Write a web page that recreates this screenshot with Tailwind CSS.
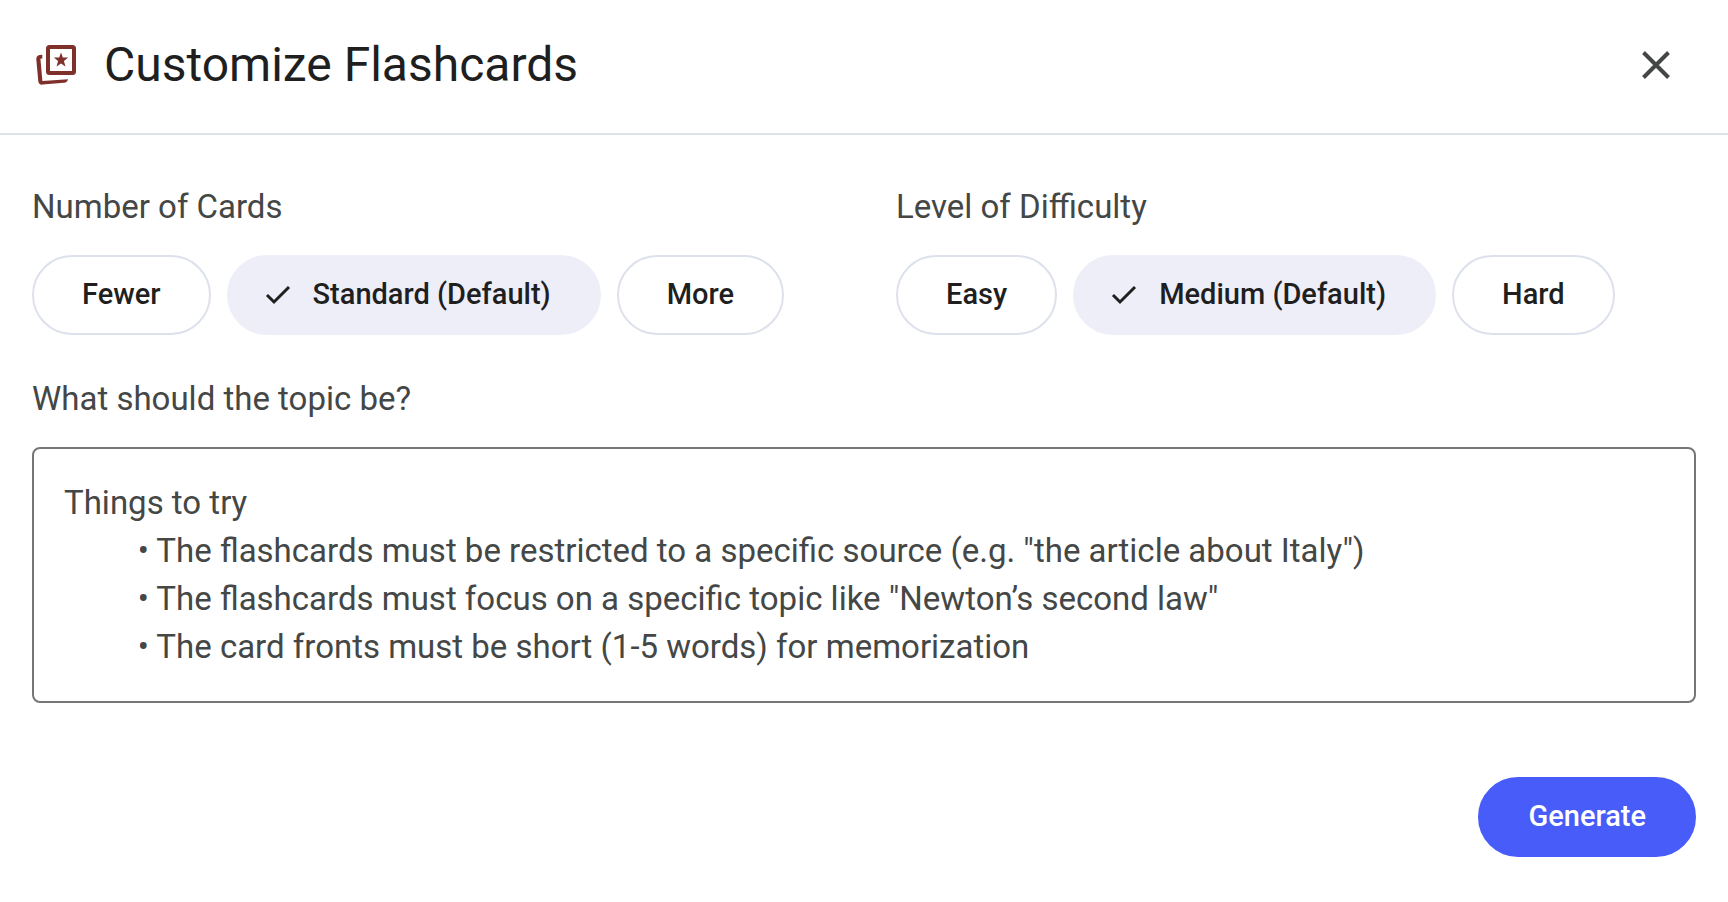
<!DOCTYPE html>
<html lang="en">
  <head>
    <meta charset="UTF-8" />
    <meta name="viewport" content="width=device-width, initial-scale=1.0" />
    <title>Customize Flashcards</title>
    <script src="https://cdn.jsdelivr.net/npm/@tailwindcss/browser@4"></script>
  </head>
  <body class="bg-white font-[Roboto,sans-serif] text-[#444746]">
    <header
      class="flex items-center justify-between border-b-2 border-[#dde1e8] pt-[33px] pb-9 pl-8 pr-10"
    >
      <div class="flex items-center gap-6">
        <svg class="size-12" viewBox="0 0 48 48" fill="none" aria-hidden="true">
          <rect x="16" y="6" width="26" height="26" rx="1.5" stroke="#80302a" stroke-width="4" stroke-linejoin="round" />
          <path
            d="M29 11.500L30.800 16.500H36.200L31.900 19.900L33.500 25.500L29 22.400L24.500 25.500L26.100 19.900L21.800 16.500H27.200Z"
            fill="#80302a"
          />
          <path
            d="M10.300 13.800L7.700 14Q4 14.600 4.300 18.500L6.300 40.500Q6.800 44 10.500 43.600L32 41.800Q35.300 41.400 36 38.200L10.400 40L8.400 17.700L10.300 17.500Z"
            fill="#80302a"
          />
        </svg>
        <h1 class="text-5xl leading-16 text-[#1f1f1f]">
          Customize Flashcards
        </h1>
      </div>
      <button type="button" aria-label="Close" class="p-2">
        <svg class="size-12" viewBox="0 0 48 48" fill="none" aria-hidden="true">
          <path d="M11.500 11.500l25 25M36.500 11.500l-25 25" stroke="#444746" stroke-width="4" />
        </svg>
      </button>
    </header>

    <form class="px-8 pt-12" onsubmit="return false">
      <div class="grid grid-cols-2 gap-16">
        <fieldset>
          <legend class="text-[33px] leading-12">Number of Cards</legend>
          <div class="mt-6 flex gap-4 text-[29px] font-medium text-[#1f1f1f]">
            <label class="flex h-20 items-center rounded-full border-2 border-[#dde1eb] px-12">
              <input class="sr-only" type="radio" name="count" value="fewer" />
              Fewer
            </label>
            <label class="flex h-20 items-center gap-4 rounded-full border-2 border-[#eeeef9] bg-[#eeeef9] pl-8 pr-12">
              <input class="sr-only" type="radio" name="count" value="standard" checked />
              <svg class="size-9" viewBox="0 0 36 36" fill="none" aria-hidden="true">
                <path d="M6 18l7 7L28 10" stroke="#1f1f1f" stroke-width="3" />
              </svg>
              Standard (Default)
            </label>
            <label class="flex h-20 items-center rounded-full border-2 border-[#dde1eb] px-12">
              <input class="sr-only" type="radio" name="count" value="more" />
              More
            </label>
          </div>
        </fieldset>

        <fieldset>
          <legend class="text-[33px] leading-12">Level of Difficulty</legend>
          <div class="mt-6 flex gap-4 text-[29px] font-medium text-[#1f1f1f]">
            <label class="flex h-20 items-center rounded-full border-2 border-[#dde1eb] px-12">
              <input class="sr-only" type="radio" name="level" value="easy" />
              Easy
            </label>
            <label class="flex h-20 items-center gap-4 rounded-full border-2 border-[#eeeef9] bg-[#eeeef9] pl-8 pr-12">
              <input class="sr-only" type="radio" name="level" value="medium" checked />
              <svg class="size-9" viewBox="0 0 36 36" fill="none" aria-hidden="true">
                <path d="M6 18l7 7L28 10" stroke="#1f1f1f" stroke-width="3" />
              </svg>
              Medium (Default)
            </label>
            <label class="flex h-20 items-center rounded-full border-2 border-[#dde1eb] px-12">
              <input class="sr-only" type="radio" name="level" value="hard" />
              Hard
            </label>
          </div>
        </fieldset>
      </div>

      <label for="topic" class="mt-10 block text-[33px] leading-12">
        What should the topic be?
      </label>
      <textarea
        id="topic"
        name="topic"
        rows="4"
        class="mt-6 block w-full resize-none rounded-lg border-2 border-[#747775] p-[30px] text-[33px] leading-12 placeholder:text-[#444746]"
        placeholder="Things to try&#10;         • The flashcards must be restricted to a specific source (e.g. &quot;the article about Italy&quot;)&#10;         • The flashcards must focus on a specific topic like &quot;Newton’s second law&quot;&#10;         • The card fronts must be short (1-5 words) for memorization"
      ></textarea>

      <div class="mt-[74px] flex justify-end">
        <button
          type="submit"
          class="h-20 rounded-full border-2 border-[#475cf8] bg-[#475cf8] px-12 text-[29px] font-medium text-white"
        >
          Generate
        </button>
      </div>
    </form>
  </body>
</html>
